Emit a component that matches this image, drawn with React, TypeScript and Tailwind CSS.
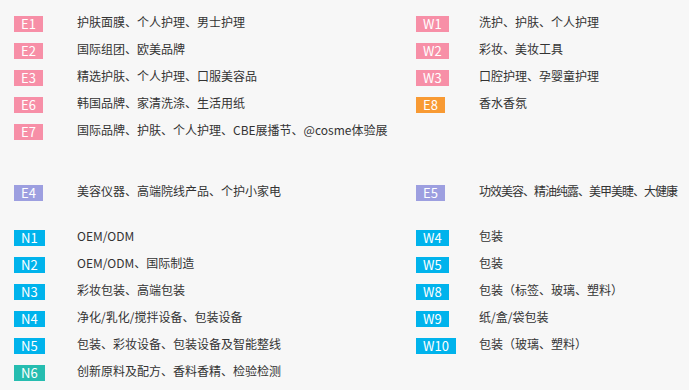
import React from "react";

type Item = { code: string; color: string; text: string; tight?: boolean } | null;

const PINK = "bg-[#f78fa7]";
const BLUE = "bg-[#00b3ec]";
const PURPLE = "bg-[#9d9fe0]";
const TEAL = "bg-[#26bdb0]";
const ORANGE = "bg-[#f89a33]";

const sec1: [Item, Item][] = [
  [{ code: "E1", color: PINK, text: "护肤面膜、个人护理、男士护理" }, { code: "W1", color: PINK, text: "洗护、护肤、个人护理" }],
  [{ code: "E2", color: PINK, text: "国际组团、欧美品牌" }, { code: "W2", color: PINK, text: "彩妆、美妆工具" }],
  [{ code: "E3", color: PINK, text: "精选护肤、个人护理、口服美容品" }, { code: "W3", color: PINK, text: "口腔护理、孕婴童护理" }],
  [{ code: "E6", color: PINK, text: "韩国品牌、家清洗涤、生活用纸" }, { code: "E8", color: ORANGE, text: "香水香氛" }],
  [{ code: "E7", color: PINK, text: "国际品牌、护肤、个人护理、CBE展播节、@cosme体验展" }, null],
];

const sec2: [Item, Item][] = [
  [
    { code: "E4", color: PURPLE, text: "美容仪器、高端院线产品、个护小家电" },
    { code: "E5", color: PURPLE, text: "功效美容、精油纯露、美甲美睫、大健康", tight: true },
  ],
];

const sec3: [Item, Item][] = [
  [{ code: "N1", color: BLUE, text: "OEM/ODM" }, { code: "W4", color: BLUE, text: "包装" }],
  [{ code: "N2", color: BLUE, text: "OEM/ODM、国际制造" }, { code: "W5", color: BLUE, text: "包装" }],
  [{ code: "N3", color: BLUE, text: "彩妆包装、高端包装" }, { code: "W8", color: BLUE, text: "包装（标签、玻璃、塑料）" }],
  [{ code: "N4", color: BLUE, text: "净化/乳化/搅拌设备、包装设备" }, { code: "W9", color: BLUE, text: "纸/盒/袋包装" }],
  [{ code: "N5", color: BLUE, text: "包装、彩妆设备、包装设备及智能整线" }, { code: "W10", color: BLUE, text: "包装（玻璃、塑料）" }],
  [{ code: "N6", color: TEAL, text: "创新原料及配方、香料香精、检验检测" }, null],
];

function Cell({ item }: { item: Item }) {
  if (!item) return <div />;
  return (
    <div className="flex items-center h-[16px]">
      <div className="w-[63px] shrink-0">
        <span
          className={`inline-flex items-center justify-center h-[16px] px-[7px] text-[13px] leading-none text-white ${item.color}`}
        >
          {item.code}
        </span>
      </div>
      <span
        className={`text-[12px] leading-none text-[#333333] whitespace-nowrap ${
          item.tight ? "tracking-[-1px]" : ""
        }`}
      >
        {item.text}
      </span>
    </div>
  );
}

function Section({ rows, className }: { rows: [Item, Item][]; className?: string }) {
  return (
    <div className={`grid grid-cols-[402px_1fr] gap-y-[11px] ${className ?? ""}`}>
      {rows.map((r, i) => (
        <React.Fragment key={i}>
          <Cell item={r[0]} />
          <Cell item={r[1]} />
        </React.Fragment>
      ))}
    </div>
  );
}

export default function App() {
  return (
    <div
      className="w-[689px] h-[390px] bg-[#f7f7f7] pl-[14px] pt-[14px] overflow-hidden"
      style={{ fontFamily: '"Noto Sans CJK SC", "Noto Sans", sans-serif' }}
    >
      <Section rows={sec1} />
      <Section rows={sec2} className="mt-[45px]" />
      <Section rows={sec3} className="mt-[29px]" />
    </div>
  );
}
